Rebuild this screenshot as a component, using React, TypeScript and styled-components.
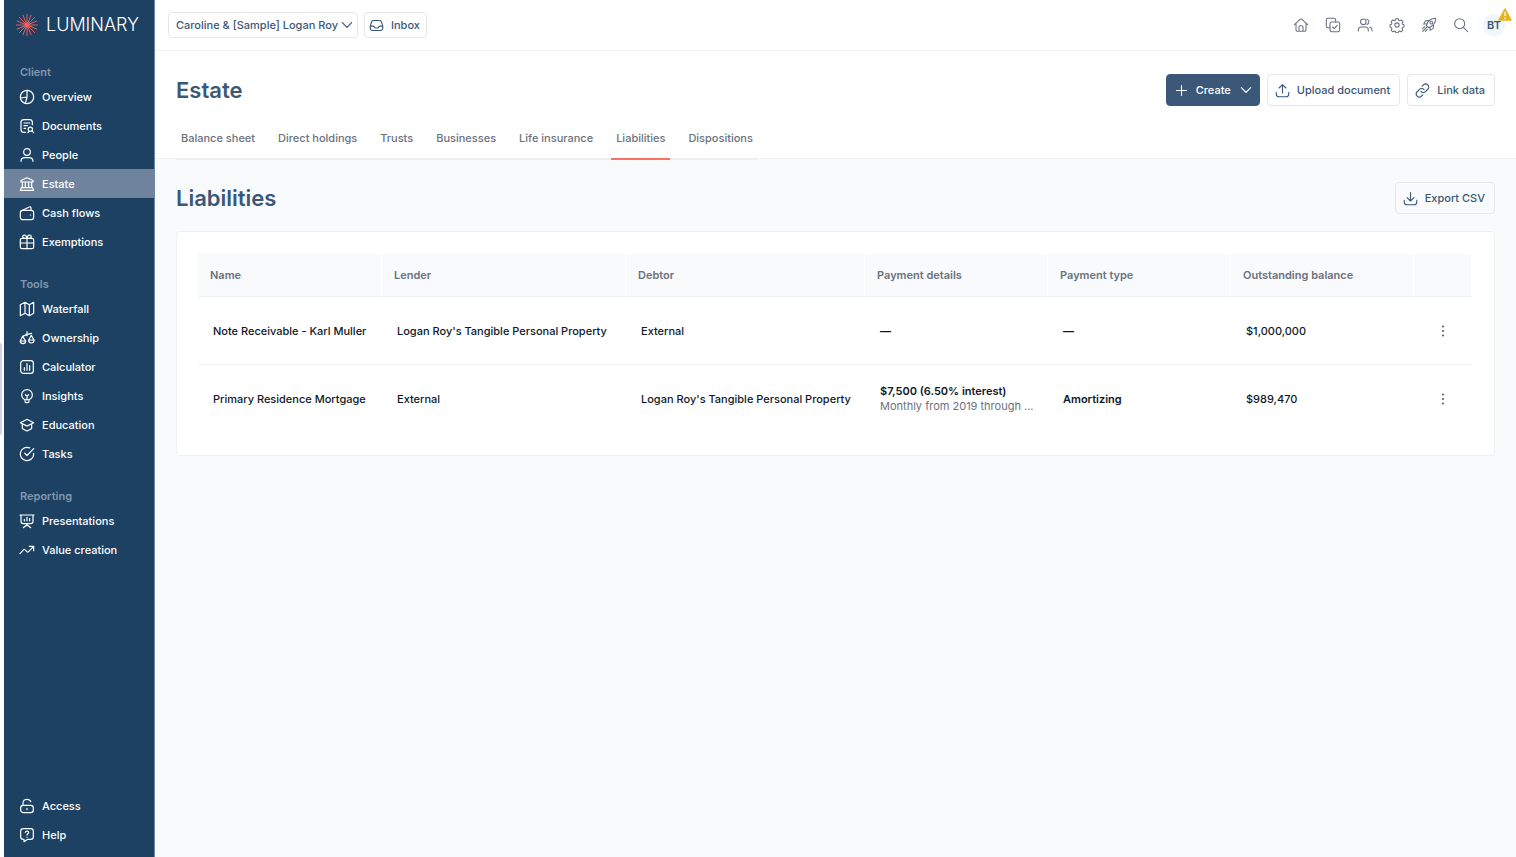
import React from "react";
import styled, { createGlobalStyle, css } from "styled-components";

const GlobalStyle = createGlobalStyle`
  * { box-sizing: border-box; }
  body {
    margin: 0;
    background: #f9fafc;
    font-family: Inter, "Liberation Sans", sans-serif;
    font-size: 11px;
    line-height: 16px;
    color: #111827;
  }
  button, select { font: inherit; margin: 0; }
  h1, h2, h3, ul { margin: 0; padding: 0; }
`;

const navy = "#3b5878";

/* ---------- icons ---------- */

const icons: Record<string, React.ReactNode> = {
  overview: (
    <>
      <circle cx="12" cy="12" r="10" />
      <path d="M12 2v10l-2.500 9.600M12 12l-9.800 1.500" />
    </>
  ),
  documents: (
    <>
      <path d="M20 10V6.500c0-2.500-1-4-4-4H7.500c-3 0-4.500 1.500-4.500 4v11c0 2.500 1.500 4 4.500 4H10M7.500 7.500h8.500M7.500 11.500h5M7.500 15.500h2.500" />
      <circle cx="17" cy="17" r="3.200" />
      <path d="M19.500 19.500L22 22M14.500 20.500l-1 1.500" />
    </>
  ),
  person: (
    <>
      <circle cx="12" cy="7.500" r="5" />
      <path d="M3 21.500c0-4 3-5.500 6-5.500h6c3 0 6 1.500 6 5.500" />
    </>
  ),
  bank: (
    <>
      <path d="M3 9h18M3 9V6.800L12 2.500l9 4.300V9M5 9v8.500M9.500 9v8.500M14.500 9v8.500M19 9v8.500M3.500 17.500h17M2 21.500h20M3.500 17.500L2 21.500M20.500 17.500l1.500 4" />
    </>
  ),
  wallet: (
    <>
      <rect x="2" y="8" width="20" height="14" rx="3.500" />
      <path d="M3 9l12.500-6c1.500-.6 2.500 0 2.500 1.500V8M17 15h.5" />
    </>
  ),
  gift: (
    <>
      <path d="M12 6.500V22M12 6.500H8.500a2.400 2.400 0 1 1 0-4.700C11.300 1.800 12 6.500 12 6.500zM12 6.500h3.500a2.400 2.400 0 1 0 0-4.700C12.700 1.800 12 6.500 12 6.500zM2 13.500h20" />
      <rect x="2" y="6.500" width="20" height="15.500" rx="2.500" />
    </>
  ),
  map: (
    <path d="M9 18.500L2 22V5.500L9 2m0 16.500l6.500 3.500M9 18.500V2m6.500 20l6.500-3.500V2l-6.500 3.500m0 16.500V5.500M9 2l6.500 3.500" />
  ),
  scale: (
    <>
      <path d="M12 2.500v6M5.500 9.500L12 6.500l7-1.500M5.500 9.500l-3.500 7h8zM18.500 8l-4 7h8z" />
      <path d="M2 16.500c0 5.300 8 5.300 8 0M14.500 15c0 6 8 6 8 0" />
    </>
  ),
  calculator: (
    <>
      <rect x="2.500" y="2.500" width="19" height="19" rx="4" />
      <path d="M8 17v-4M12 17V7M16 17v-7" />
    </>
  ),
  bulb: (
    <>
      <path d="M9 17.600V20c0 1.500.5 2 2 2h2c1.500 0 2-.5 2-2v-2.400M9 17.600h6M9 17.600c-3-1.200-5-4-5-7.300a8 8 0 0 1 16 0c0 3.300-2 6.100-5 7.300" />
      <path d="M12 17.500V12M9.500 10l2.500 2 2.500-2" />
    </>
  ),
  education: (
    <path d="M5 10.500v6c0 .8.400 1.200 1 1.500l5 2.700c.7.400 1.300.4 2 0l5-2.700c.6-.3 1-.7 1-1.500v-6M2 8.500l9.500-4.800c.4-.2.600-.2 1 0L22 8.500l-9.500 4.800c-.4.200-.6.200-1 0z" />
  ),
  check: (
    <path d="M22 11v1a10 10 0 1 1-6-9.200M22 4L12 14.200l-3.500-3.500" />
  ),
  presentation: (
    <path d="M1.500 3h21M3 3v9.500c0 2.500 1 3.500 3.500 3.500h11c2.500 0 3.500-1 3.500-3.500V3M12 16v3M6.500 22l5.500-4.500 5.500 4.500M8 12V9.500M12 12V6.500M16 12V8.500" />
  ),
  trend: <path d="M1.500 17.500l5.500-6c.6-.6 1.200-.6 1.800 0l3.400 3.300c.6.600 1.200.6 1.800 0l8-8.300M15.500 6.500H22V13" />,
  lock: (
    <>
      <path d="M6 11V7.500C6 4 8.500 2 12 2c2.800 0 4.800 1.200 5.600 3.500M12 15.500v2" />
      <rect x="2.500" y="11" width="19" height="11" rx="4" />
    </>
  ),
  help: (
    <>
      <path d="M6.500 2.500h11c2.700 0 4 1.300 4 4v8c0 2.700-1.300 4-4 4H13L7.500 22v-3.500h-1c-2.700 0-4-1.300-4-4v-8c0-2.700 1.300-4 4-4z" />
      <path d="M9.500 8.200c.3-1.200 1.300-2 2.600-2 1.400 0 2.500.9 2.500 2.200 0 1.700-2.500 2-2.500 3.600M12 15v.3" />
    </>
  ),
  chevron: <path d="M5 8.500l7 7 7-7" />,
  inbox: (
    <path d="M2 13h4.500c1 0 1.500.5 2 1.300.5.900 1 1.700 2 1.700h3c1 0 1.500-.8 2-1.700.5-.8 1-1.300 2-1.300H22M6.800 4h10.400c1.300 0 1.900.5 2.300 1.500l2 5.500c.4 1 .5 1.500.5 2.500v2.500c0 3-1.200 4-4 4H6c-2.800 0-4-1-4-4v-2.500c0-1 .1-1.500.5-2.500l2-5.500C4.900 4.500 5.500 4 6.800 4z" />
  ),
  home: (
    <path d="M2 11.500L11 3.200c.7-.6 1.300-.6 2 0l9 8.300M4.500 9.500V19c0 1.700.8 2.500 2.500 2.500h10c1.700 0 2.500-.8 2.500-2.500V9.500M9 21.500V15c0-1.200.6-1.800 1.800-1.800h2.400c1.200 0 1.800.6 1.800 1.800v6.500" />
  ),
  tasks: (
    <>
      <path d="M7.500 16H4.500C2.800 16 2 15.200 2 13.500v-9C2 2.800 2.800 2 4.500 2h9c1.700 0 2.500.8 2.500 2.500v3" />
      <rect x="7.500" y="7.500" width="14.500" height="14.500" rx="2.500" />
      <path d="M11.500 15l2.300 2.300 4.500-4.600" />
    </>
  ),
  users: (
    <path d="M2 21v-1.500C2 16.500 4 15 6.500 15h6c2.500 0 4.500 1.500 4.500 4.500V21M22.500 21v-1.500c0-2.300-1.200-3.800-3.300-4.300M15 3.200a4.200 4.200 0 0 1 0 8M9.500 3a4.200 4.200 0 1 1 0 8.400 4.200 4.200 0 0 1 0-8.400z" />
  ),
  gear: (
    <>
      <circle cx="12" cy="12" r="3.200" />
      <path d="M10 2.500h4l.6 2.600 1.500.7 2.400-1.400 2.500 2.600-1.300 2.400.6 1.500 2.200.8v3.400l-2.300.9-.6 1.400 1.200 2.400-2.600 2.500-2.300-1.300-1.500.6-.6 2.100h-3.600l-.7-2.200-1.500-.6-2.400 1.300-2.500-2.500 1.300-2.400-.6-1.400-2.300-.8v-3.500l2.300-.8.6-1.500-1.200-2.300 2.500-2.600 2.300 1.300 1.500-.7z" />
    </>
  ),
  rocket: (
    <>
      <path d="M8 12.500C10 6.500 14 2 22 2c0 7.500-4.500 12-10.500 14zM8.800 10.500L4 10.500l3-5 5-.2M13.500 15.200v4.800l5-3 .2-5M9 15L2.500 21.500M5.500 14.500L2.500 17.500M9.500 18.500L6.500 21.500" />
      <circle cx="15.500" cy="8.500" r="2" />
    </>
  ),
  search: (
    <>
      <circle cx="10" cy="10" r="7.500" />
      <path d="M15.500 15.500L22 22" />
    </>
  ),
  plus: <path d="M12 4v16M4 12h16" />,
  upload: <path d="M12 16V2.500M6.500 8L12 2.500 17.500 8M2 15v2.500c0 3 1.300 4.500 4.500 4.500h11c3.200 0 4.500-1.500 4.500-4.500V15" />,
  download: <path d="M12 2.500V16M6.500 10.500L12 16l5.500-5.500M2 15v2.500c0 3 1.300 4.500 4.500 4.500h11c3.200 0 4.500-1.500 4.500-4.500V15" />,
  link: (
    <path d="M9.500 13.500a5 5 0 0 0 7.300.2l3.700-3.700a4.900 4.900 0 0 0-7-7l-2 2M14.500 10.500a5 5 0 0 0-7.300-.2L3.500 14a4.900 4.900 0 0 0 7 7l2-2" />
  ),
};

const Svg = styled.svg`
  flex: none;
  display: block;
  fill: none;
  stroke: currentColor;
  stroke-linecap: round;
  stroke-linejoin: round;
`;

const Icon = ({ name, size = 16, weight = 1.8 }: { name: string; size?: number; weight?: number }) => (
  <Svg width={size} height={size} viewBox="0 0 24 24" strokeWidth={weight} aria-hidden="true">
    {icons[name]}
  </Svg>
);

const Sunburst = () => (
  <Svg width="24" height="24" viewBox="-12 -12 24 24" strokeWidth="0.900" aria-hidden="true" color="#f4615c">
    <circle r="2" fill="currentColor" />
    {Array.from({ length: 16 }, (_, i) => (
      <path key={i} d="M0-2V-10.700" transform={`rotate(${i * 22.5})`} />
    ))}
  </Svg>
);

/* ---------- shell ---------- */

const Shell = styled.div`
  display: flex;
  min-height: 100vh;
`;

const Gutter = styled.div`
  flex: none;
  width: 4px;
  display: flex;
  align-items: center;
  padding-bottom: 80px;
  background: #ffffff;
`;

const Handle = styled.span`
  width: 2px;
  height: 92px;
  border-radius: 0 2px 2px 0;
  background: #ccd6e4;
`;

const Sidebar = styled.nav`
  flex: none;
  width: 151px;
  display: flex;
  flex-direction: column;
  padding-bottom: 8px;
  background: #1c4163;
  border-right: 1px solid #6f86a1;
  color: #ffffff;
`;

const Brand = styled.a`
  display: flex;
  align-items: center;
  gap: 7px;
  height: 50px;
  margin-bottom: 12px;
  padding-left: 11px;
  color: #ffffff;
  font-size: 18px;
  font-weight: 300;
  line-height: 24px;
  text-decoration: none;
`;

const NavSection = styled.section`
  margin-bottom: 18px;
`;

const NavHeading = styled.h3`
  padding-left: 16px;
  color: #8398af;
  font-size: 11px;
  font-weight: 600;
  line-height: 20px;
`;

const NavList = styled.ul`
  list-style: none;
`;

const NavLink = styled.a<{ $active?: boolean }>`
  display: flex;
  align-items: center;
  gap: 7px;
  height: 29px;
  padding-left: 15px;
  color: #ffffff;
  font-weight: 500;
  text-decoration: none;
  background: ${(p) => (p.$active ? "#6f839d" : "transparent")};
`;

const Spacer = styled.div`
  flex: 1;
`;

const Page = styled.div`
  flex: 1;
  min-width: 0;
`;

const TopBar = styled.header`
  display: flex;
  align-items: center;
  justify-content: space-between;
  height: 51px;
  padding: 0 11px 0 13px;
  background: #ffffff;
  border-bottom: 1px solid #eff0f3;
`;

const Group = styled.div<{ $gap: number }>`
  display: flex;
  align-items: center;
  gap: ${(p) => p.$gap}px;
`;

const boxed = css`
  border: 1px solid #e5e7eb;
  border-radius: 4px;
  background: transparent;
  color: ${navy};
  font-weight: 500;
`;

const SelectBox = styled.label`
  ${boxed}
  display: grid;
  align-items: center;
  width: 190px;
  height: 26px;
  > * { grid-area: 1 / 1; }
  > svg {
    justify-self: end;
    margin-right: 2px;
    pointer-events: none;
  }
`;

const ClientSelect = styled.select`
  appearance: none;
  width: 100%;
  height: 100%;
  padding: 0 16px 0 7px;
  border: 0;
  background: transparent;
  color: inherit;
`;

const Button = styled.button<{ $primary?: boolean; $small?: boolean }>`
  ${boxed}
  display: flex;
  align-items: center;
  gap: 7px;
  height: ${(p) => (p.$small ? 26 : 32)}px;
  padding: ${(p) => (p.$small ? "0 6px 0 4px" : "0 9px 0 7px")};
  ${(p) =>
    p.$primary &&
    css`
      padding-right: 5px;
      background: ${navy};
      border-color: ${navy};
      color: #ffffff;
    `}
`;

const IconButton = styled.button`
  display: grid;
  place-items: center;
  width: 20px;
  height: 24px;
  padding: 0;
  border: 0;
  background: transparent;
  color: #6b7280;
`;

const Avatar = styled.button`
  position: relative;
  width: 22px;
  height: 22px;
  padding: 0;
  border: 0;
  border-radius: 50%;
  background: #eff6ff;
  color: ${navy};
  font-weight: 600;
  line-height: 22px;
`;

const Warning = styled.svg`
  position: absolute;
  top: -6px;
  right: -7px;
`;

const PageHead = styled.div`
  padding: 23px 21px 0;
  background: #ffffff;
  border-bottom: 1px solid #eff0f3;
`;

const TitleRow = styled.div`
  display: flex;
  align-items: center;
  justify-content: space-between;
  min-height: 32px;
`;

const Title = styled.h1`
  color: ${navy};
  font-size: 22px;
  font-weight: 600;
  line-height: 32px;
`;

const Tabs = styled.div`
  display: flex;
  gap: 13px;
  width: max-content;
  margin: 12px 0 -2px;
  border-bottom: 1px solid #eff0f3;
`;

const Tab = styled.a<{ $active?: boolean }>`
  height: 42px;
  margin-bottom: -1px;
  padding: 0 5px;
  border-bottom: 2px solid ${(p) => (p.$active ? "#f97066" : "transparent")};
  color: #6b7280;
  font-weight: 500;
  line-height: 40px;
  text-decoration: none;
`;

const Content = styled.main`
  padding: 23px 21px;
`;

const Card = styled.section`
  margin-top: 17px;
  padding: 22px 22px 22px 21px;
  background: #ffffff;
  border: 1px solid #eff0f3;
  border-radius: 4px;
`;

const Table = styled.table`
  width: 100%;
  table-layout: fixed;
  border-collapse: separate;
  border-spacing: 0;
  text-align: left;
`;

const HeadCell = styled.th`
  height: 43px;
  padding: 0 12px;
  background: #f9fafc;
  border-bottom: 1px solid #eff0f3;
  border-right: 1px solid #ffffff;
  color: #6b7280;
  font-weight: 600;
`;

const Row = styled.tr`
  &:not(:last-child) > td { border-bottom: 1px solid #eff0f3; }
`;

const Cell = styled.td<{ $strong?: boolean }>`
  height: 68px;
  padding: 0 15px;
  font-weight: ${(p) => (p.$strong ? 600 : 500)};
  white-space: nowrap;
`;

const Detail = styled.div<{ $muted?: boolean }>`
  line-height: 15px;
  font-weight: ${(p) => (p.$muted ? 400 : 600)};
  color: ${(p) => (p.$muted ? "#6b7280" : "#111827")};
`;

const MoreButton = styled(IconButton)`
  margin: 0 auto;
  color: #4b5563;
`;

/* ---------- data ---------- */

type Item = [icon: string, label: string];

const sections: { title: string; items: Item[] }[] = [
  {
    title: "Client",
    items: [
      ["overview", "Overview"],
      ["documents", "Documents"],
      ["person", "People"],
      ["bank", "Estate"],
      ["wallet", "Cash flows"],
      ["gift", "Exemptions"],
    ],
  },
  {
    title: "Tools",
    items: [
      ["map", "Waterfall"],
      ["scale", "Ownership"],
      ["calculator", "Calculator"],
      ["bulb", "Insights"],
      ["education", "Education"],
      ["check", "Tasks"],
    ],
  },
  {
    title: "Reporting",
    items: [
      ["presentation", "Presentations"],
      ["trend", "Value creation"],
    ],
  },
];

const footer: Item[] = [
  ["lock", "Access"],
  ["help", "Help"],
];

const tabs = ["Balance sheet", "Direct holdings", "Trusts", "Businesses", "Life insurance", "Liabilities", "Dispositions"];

const tools: Item[] = [
  ["home", "Home"],
  ["tasks", "Tasks"],
  ["users", "People"],
  ["gear", "Settings"],
  ["rocket", "What's new"],
  ["search", "Search"],
];

const columns: [string, number][] = [
  ["Name", 184],
  ["Lender", 244],
  ["Debtor", 239],
  ["Payment details", 183],
  ["Payment type", 183],
  ["Outstanding balance", 183],
  ["", 58],
];

interface Liability {
  name: string;
  lender: string;
  debtor: string;
  payment?: [string, string];
  type?: string;
  balance: string;
}

const liabilities: Liability[] = [
  {
    name: "Note Receivable - Karl Muller",
    lender: "Logan Roy's Tangible Personal Property",
    debtor: "External",
    balance: "$1,000,000",
  },
  {
    name: "Primary Residence Mortgage",
    lender: "External",
    debtor: "Logan Roy's Tangible Personal Property",
    payment: ["$7,500 (6.50% interest)", "Monthly from 2019 through ..."],
    type: "Amortizing",
    balance: "$989,470",
  },
];

const NavItems = ({ items }: { items: Item[] }) => (
  <NavList>
    {items.map(([icon, label]) => (
      <li key={label}>
        <NavLink href="#" $active={label === "Estate"} aria-current={label === "Estate" ? "page" : undefined}>
          <Icon name={icon} />
          {label}
        </NavLink>
      </li>
    ))}
  </NavList>
);

export default function App() {
  return (
    <>
      <GlobalStyle />
      <Shell>
        <Gutter>
          <Handle />
        </Gutter>
        <Sidebar aria-label="Main">
          <Brand href="#">
            <Sunburst />
            LUMINARY
          </Brand>
          {sections.map((s) => (
            <NavSection key={s.title}>
              <NavHeading>{s.title}</NavHeading>
              <NavItems items={s.items} />
            </NavSection>
          ))}
          <Spacer />
          <NavItems items={footer} />
        </Sidebar>
        <Page>
          <TopBar>
            <Group $gap={6}>
              <SelectBox>
                <ClientSelect aria-label="Client">
                  <option>Caroline &amp; [Sample] Logan Roy</option>
                </ClientSelect>
                <Icon name="chevron" />
              </SelectBox>
              <Button $small>
                <Icon name="inbox" size={15} />
                Inbox
              </Button>
            </Group>
            <Group $gap={12}>
              {tools.map(([icon, label]) => (
                <IconButton key={icon} aria-label={label}>
                  <Icon name={icon} weight={1.6} />
                </IconButton>
              ))}
              <Avatar aria-label="Account">
                BT
                <Warning width="14" height="13" viewBox="0 0 14 13" aria-hidden="true">
                  <path d="M7 1l6 11H1z" fill="#eab320" stroke="#eab320" strokeWidth="1.500" strokeLinejoin="round" />
                  <path d="M7 4v4M7 9.600v1.400" stroke="#ffffff" strokeWidth="1.300" />
                </Warning>
              </Avatar>
            </Group>
          </TopBar>
          <PageHead>
            <TitleRow>
              <Title>Estate</Title>
              <Group $gap={7}>
                <Button $primary>
                  <Icon name="plus" size={15} />
                  Create
                  <Icon name="chevron" />
                </Button>
                <Button>
                  <Icon name="upload" size={15} />
                  Upload document
                </Button>
                <Button>
                  <Icon name="link" size={15} />
                  Link data
                </Button>
              </Group>
            </TitleRow>
            <Tabs>
              {tabs.map((t) => (
                <Tab key={t} href="#" $active={t === "Liabilities"}>
                  {t}
                </Tab>
              ))}
            </Tabs>
          </PageHead>
          <Content>
            <TitleRow>
              <Title as="h2">Liabilities</Title>
              <Button>
                <Icon name="download" size={15} />
                Export CSV
              </Button>
            </TitleRow>
            <Card>
              <Table>
                <colgroup>
                  {columns.map(([label, width]) => (
                    <col key={label} width={width} />
                  ))}
                </colgroup>
                <thead>
                  <tr>
                    {columns.map(([label]) => (
                      <HeadCell key={label}>{label}</HeadCell>
                    ))}
                  </tr>
                </thead>
                <tbody>
                  {liabilities.map((l) => (
                    <Row key={l.name}>
                      <Cell>{l.name}</Cell>
                      <Cell>{l.lender}</Cell>
                      <Cell>{l.debtor}</Cell>
                      <Cell $strong>
                        {l.payment ? (
                          <>
                            <Detail>{l.payment[0]}</Detail>
                            <Detail $muted>{l.payment[1]}</Detail>
                          </>
                        ) : (
                          "—"
                        )}
                      </Cell>
                      <Cell $strong>{l.type ?? "—"}</Cell>
                      <Cell>{l.balance}</Cell>
                      <Cell>
                        <MoreButton aria-label={`Actions for ${l.name}`}>
                          <svg width="4" height="12" viewBox="0 0 4 12" fill="currentColor" aria-hidden="true">
                            <circle cx="2" cy="1.500" r="1" />
                            <circle cx="2" cy="6" r="1" />
                            <circle cx="2" cy="10.500" r="1" />
                          </svg>
                        </MoreButton>
                      </Cell>
                    </Row>
                  ))}
                </tbody>
              </Table>
            </Card>
          </Content>
        </Page>
      </Shell>
    </>
  );
}
